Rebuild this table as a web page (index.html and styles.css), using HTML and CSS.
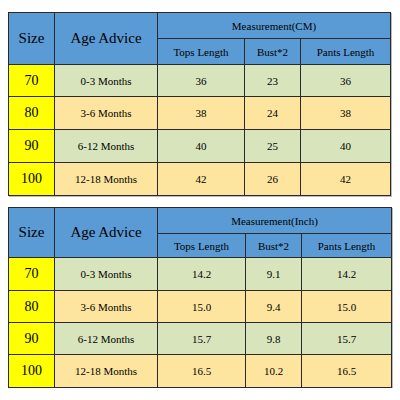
FILE: index.html
```html
<!DOCTYPE html>
<html lang="en">
<head>
    <meta charset="UTF-8">
    <meta name="viewport" content="width=device-width, initial-scale=1.0">
    <title>Size Chart</title>
    <link rel="stylesheet" href="styles.css">
</head>
<body>

    <div class="charts">
        <!-- Centimetre chart -->
        <table class="size-table cm">
            <colgroup>
                <col class="c-size"><col class="c-age"><col class="c-tops"><col class="c-bust"><col class="c-pants">
            </colgroup>
            <thead>
                <tr class="head-top">
                    <th rowspan="2" class="big">Size</th>
                    <th rowspan="2" class="big">Age Advice</th>
                    <th colspan="3">Measurement(CM)</th>
                </tr>
                <tr class="head-sub">
                    <th>Tops Length</th>
                    <th>Bust*2</th>
                    <th>Pants Length</th>
                </tr>
            </thead>
            <tbody>
                <tr class="green short"><td class="size">70</td><td>0-3 Months</td><td>36</td><td>23</td><td>36</td></tr>
                <tr class="orange"><td class="size">80</td><td>3-6 Months</td><td>38</td><td>24</td><td>38</td></tr>
                <tr class="green"><td class="size">90</td><td>6-12 Months</td><td>40</td><td>25</td><td>40</td></tr>
                <tr class="orange"><td class="size">100</td><td>12-18 Months</td><td>42</td><td>26</td><td>42</td></tr>
            </tbody>
        </table>

        <!-- Inch chart -->
        <table class="size-table inch">
            <colgroup>
                <col class="c-size"><col class="c-age"><col class="c-tops"><col class="c-bust"><col class="c-pants">
            </colgroup>
            <thead>
                <tr class="head-top">
                    <th rowspan="2" class="big">Size</th>
                    <th rowspan="2" class="big">Age Advice</th>
                    <th colspan="3">Measurement(Inch)</th>
                </tr>
                <tr class="head-sub">
                    <th>Tops Length</th>
                    <th>Bust*2</th>
                    <th>Pants Length</th>
                </tr>
            </thead>
            <tbody>
                <tr class="green"><td class="size">70</td><td>0-3 Months</td><td>14.2</td><td>9.1</td><td>14.2</td></tr>
                <tr class="orange short"><td class="size">80</td><td>3-6 Months</td><td>15.0</td><td>9.4</td><td>15.0</td></tr>
                <tr class="green short"><td class="size">90</td><td>6-12 Months</td><td>15.7</td><td>9.8</td><td>15.7</td></tr>
                <tr class="orange"><td class="size">100</td><td>12-18 Months</td><td>16.5</td><td>10.2</td><td>16.5</td></tr>
            </tbody>
        </table>
    </div>

</body>
</html>
```

FILE: styles.css
```css
body {
    margin: 0;
    background-color: #ffffff;
    font-family: "Liberation Serif", "Times New Roman", serif;
    color: #000;
}
.charts {
    display: flex;
    flex-direction: column;
    gap: 11px;
    padding: 12px 0 0 8px;
}
.size-table {
    border-collapse: collapse;
    table-layout: fixed;
    width: 383px;
    border: 1px solid #666;
    box-shadow: 1px 1px 0 #bbb;
}
.size-table.inch {
    width: 384px;
}
.size-table th,
.size-table td {
    border: 1px solid #2a2a2a;
    text-align: center;
    vertical-align: middle;
    padding: 0;
    font-size: 11px;
    font-weight: normal;
}
.size-table th {
    background-color: #5b9bd5;
}
.size-table th.big {
    font-size: 15px;
}
.c-size { width: 46px; }
.c-age { width: 103px; }
.c-tops { width: 87px; }
.c-bust { width: 56px; }
.c-pants { width: 90px; }
.inch .c-tops { width: 88px; }

.cm .head-top { height: 26px; }
.cm .head-sub { height: 26px; }
.inch .head-top { height: 26px; }
.inch .head-sub { height: 24px; }
.size-table tbody tr { height: 33px; }
.size-table tbody tr.short { height: 32px; }

.size-table td.size {
    background-color: #ffff00;
    font-size: 14px;
}
.green td { background-color: #d8e4bc; }
.orange td { background-color: #fde59f; }
```
